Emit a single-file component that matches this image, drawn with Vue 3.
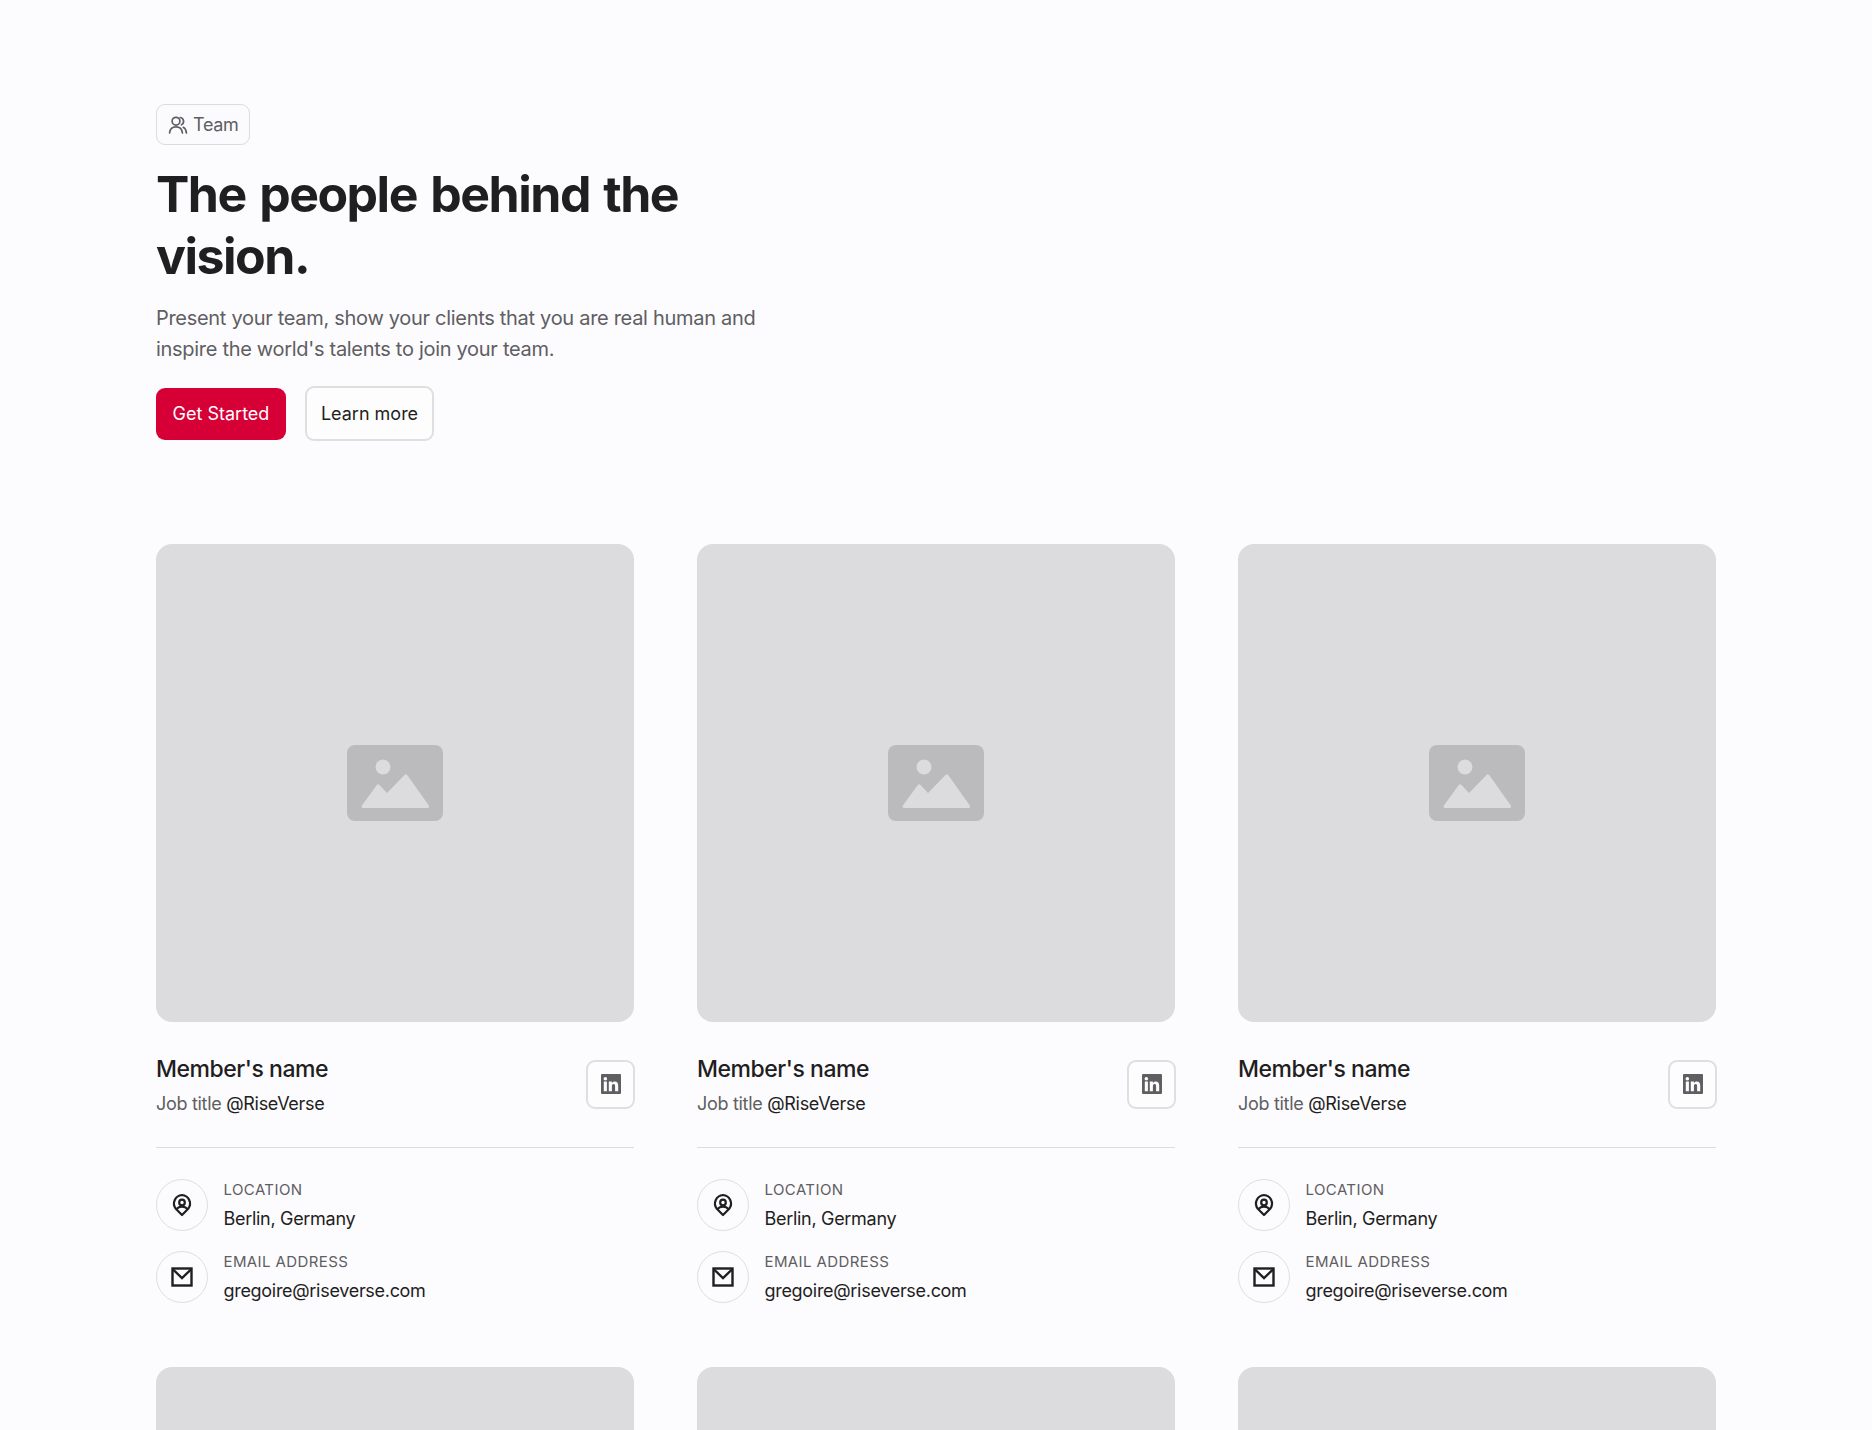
<template>
  <div class="page">
    <section class="hero">
      <div class="badge">
        <svg class="badge-icon" viewBox="0 0 20 20" fill="none" stroke="currentColor" stroke-width="1.7" stroke-linecap="round" stroke-linejoin="round">
          <circle cx="8" cy="6.2" r="3.9" />
          <path d="M1.600 18c.3-3.900 2.900-6.200 6.400-6.200s6.100 2.300 6.400 6.200" />
          <path d="M12.300 2.500a3.900 3.900 0 0 1 1.200 7.300" />
          <path d="M15.300 12.300c1.800.9 2.900 3 3.100 5.700" />
        </svg>
        <span>Team</span>
      </div>
      <h1 class="title">The people behind the vision.</h1>
      <p class="lead">Present your team, show your clients that you are real human and inspire the world's talents to join your team.</p>
      <div class="actions">
        <button class="btn primary">Get Started</button>
        <button class="btn secondary">Learn more</button>
      </div>
    </section>

    <section class="grid">
      <article v-for="member in members" :key="member.id" class="card">
        <div class="photo">
          <svg class="photo-icon" viewBox="0 0 96 76">
            <rect width="96" height="76" rx="8" fill="#bbbabc" />
            <circle cx="36" cy="22" r="7.500" fill="#dcdbdd" />
            <path d="M16 63a1.500 1.500 0 0 1-1.100-2.500L29.800 40a1.800 1.800 0 0 1 2.700 0L40 48 57.500 30a1.800 1.800 0 0 1 2.700 0L81.800 60.500A1.500 1.500 0 0 1 80.700 63Z" fill="#dcdbdd" />
          </svg>
        </div>
        <div class="head">
          <div>
            <h3 class="name">{{ member.name }}</h3>
            <p class="job">Job title <span>{{ member.company }}</span></p>
          </div>
          <a class="social">
            <svg viewBox="0 0 20 20" width="20" height="20">
              <path fill="#5f5e62" fill-rule="evenodd" d="M1 0h18a1 1 0 0 1 1 1v18a1 1 0 0 1-1 1H1a1 1 0 0 1-1-1V1a1 1 0 0 1 1-1ZM2.800 7.600V17.300h3.100V7.600H2.800Zm1.550-4.700a1.800 1.800 0 1 0 0 3.600 1.800 1.800 0 0 0 0-3.600ZM7.800 7.600V17.300h3.100v-5.100c0-1.400.6-2.100 1.700-2.100s1.500.7 1.500 2v5.200h3.100v-5.900c0-2.600-1.300-4-3.400-4-1.300 0-2.300.6-2.900 1.500V7.600H7.800Z" />
            </svg>
          </a>
        </div>
        <div class="details">
          <div class="row">
            <span class="circle">
              <svg viewBox="0 0 24 24" width="24" height="24" fill="none" stroke="#1f1e21" stroke-width="2.200" stroke-linejoin="round">
                <path d="M12 22 5.800 15.800A8.600 8.600 0 0 1 12 2a8.600 8.600 0 0 1 6.200 13.800L12 22Z" />
                <circle cx="12" cy="9.500" r="2.800" />
                <path d="M6.500 16c1.300-1.500 3.300-2.300 5.500-2.300s4.200.8 5.500 2.300" />
              </svg>
            </span>
            <div>
              <div class="label">LOCATION</div>
              <div class="value">{{ member.location }}</div>
            </div>
          </div>
          <div class="row">
            <span class="circle">
              <svg viewBox="0 0 24 24" width="24" height="24" fill="none" stroke="#1f1e21" stroke-width="2.400" stroke-linejoin="miter">
                <rect x="2.500" y="3.500" width="19" height="17" />
                <path d="m3 4.500 9 8.500 9-8.500" />
              </svg>
            </span>
            <div>
              <div class="label">EMAIL ADDRESS</div>
              <div class="value">{{ member.email }}</div>
            </div>
          </div>
        </div>
      </article>
    </section>
  </div>
</template>

<script setup>
const members = [1, 2, 3, 4, 5, 6].map((id) => ({
  id,
  name: "Member's name",
  company: '@RiseVerse',
  location: 'Berlin, Germany',
  email: 'gregoire@riseverse.com'
}))
</script>

<style scoped>
.page {
  box-sizing: border-box;
  height: 1430px;
  overflow: hidden;
  padding: 104px 156px 0;
  background: #fcfbfe;
  font-family: Inter, "Liberation Sans", sans-serif;
  color: #1f1e21;
}

.hero {
  margin-bottom: 103px;
}

.badge {
  box-sizing: border-box;
  display: inline-flex;
  align-items: center;
  gap: 5px;
  height: 41px;
  padding: 0 10px 0 11px;
  border: 1.5px solid #dcdbdd;
  border-radius: 9px;
  background: #fbfafc;
  color: #5f5e62;
  font-size: 18px;
  letter-spacing: -0.3px;
  vertical-align: top;
}

.badge-icon {
  width: 20px;
  height: 20px;
}

.title {
  width: 600px;
  margin: 18px 0 16px;
  font-size: 50px;
  line-height: 62px;
  font-weight: 700;
  letter-spacing: -1.5px;
  word-spacing: 3px;
}

.lead {
  width: 610px;
  margin: 0 0 21px;
  font-size: 20px;
  line-height: 31px;
  letter-spacing: -0.3px;
  color: #5f5e62;
}

.actions {
  display: flex;
  align-items: center;
  gap: 19px;
}

.btn {
  box-sizing: border-box;
  font-family: inherit;
  font-size: 18px;
  border-radius: 9px;
}

.primary {
  width: 130px;
  height: 52px;
  border: none;
  background: #d60036;
  color: #fff;
}

.secondary {
  width: 129px;
  height: 55px;
  border: 2px solid #dfdee0;
  background: #fdfdfe;
  color: #1f1e21;
}

.grid {
  display: grid;
  grid-template-columns: repeat(3, 1fr);
  column-gap: 63px;
  row-gap: 64px;
}

.photo {
  display: flex;
  align-items: center;
  justify-content: center;
  aspect-ratio: 1;
  border-radius: 16px;
  background: #dcdbdd;
}

.photo-icon {
  width: 96px;
  height: 76px;
}

.head {
  display: flex;
  align-items: center;
  justify-content: space-between;
  margin-top: 32px;
  padding-bottom: 30px;
  border-bottom: 1.5px solid #dcdbdd;
}

.name {
  margin: 0 0 7px;
  font-size: 23px;
  line-height: 30px;
  font-weight: 500;
  letter-spacing: -0.46px;
}

.job {
  margin: 0;
  font-size: 18px;
  line-height: 26px;
  letter-spacing: -0.3px;
  color: #5f5e62;
}

.job span {
  color: #1f1e21;
}

.social {
  box-sizing: border-box;
  display: flex;
  align-items: center;
  justify-content: center;
  width: 49px;
  height: 49px;
  margin-top: -3px;
  margin-right: -1px;
  border: 2px solid #dfdee0;
  border-radius: 9px;
  background: #fdfdfe;
}

.details {
  display: flex;
  flex-direction: column;
  gap: 20px;
  padding-top: 31px;
}

.row {
  display: flex;
  align-items: center;
  gap: 15.5px;
}

.circle {
  box-sizing: border-box;
  display: flex;
  flex: none;
  align-items: center;
  justify-content: center;
  width: 52px;
  height: 52px;
  border: 1.5px solid #dfdee0;
  border-radius: 50%;
}

.label {
  font-size: 15px;
  line-height: 22px;
  letter-spacing: 0.4px;
  color: #5f5e62;
}

.value {
  margin-top: 6px;
  font-size: 18px;
  line-height: 24px;
  letter-spacing: -0.3px;
}
</style>
